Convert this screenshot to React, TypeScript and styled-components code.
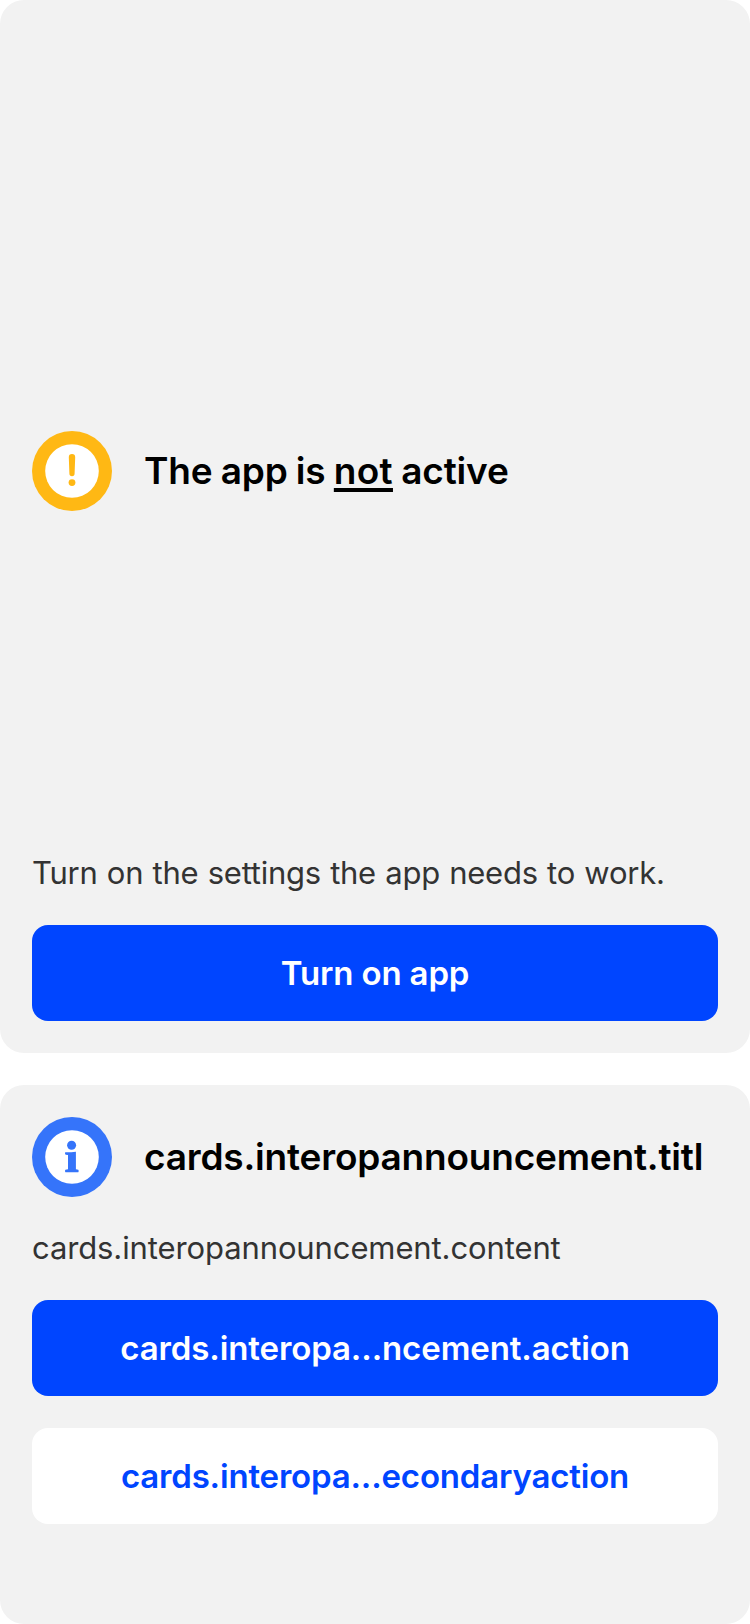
import React from "react";
import styled, { createGlobalStyle } from "styled-components";

const GlobalStyle = createGlobalStyle`
  * { box-sizing: border-box; }
  body {
    margin: 0;
    background: #ffffff;
    font-family: Inter, "Liberation Sans", sans-serif;
  }
`;

const Screen = styled.main`
  display: flex;
  flex-direction: column;
  gap: 32px;
  width: 750px;
  height: 1624px;
  overflow: hidden;
`;

const Card = styled.section<{ $height: number; $top: number }>`
  display: flex;
  flex-direction: column;
  flex: none;
  height: ${(p) => p.$height}px;
  padding: ${(p) => p.$top}px 32px 32px;
  border-radius: 24px;
  background: #f2f2f2;
`;

const Header = styled.header<{ $fill?: boolean }>`
  display: flex;
  align-items: center;
  gap: 32px;
  flex: ${(p) => (p.$fill ? 1 : "none")};
`;

const StatusIcon = styled.svg`
  display: block;
  flex: none;
  width: 80px;
  height: 80px;
`;

const Title = styled.h1`
  margin: 0;
  font-size: 37px;
  line-height: 46px;
  font-weight: 600;
  letter-spacing: -0.195px;
  word-spacing: -0.8px;
  color: #000000;
  white-space: nowrap;
`;

const Emphasis = styled.u`
  letter-spacing: 0.3px;
  text-decoration-thickness: 4px;
  text-underline-offset: 4px;
  text-decoration-skip-ink: none;
`;

const Body = styled.p<{ $tracking: number }>`
  margin: 0;
  font-size: 31px;
  line-height: 38px;
  letter-spacing: ${(p) => p.$tracking}px;
  word-spacing: 0.9px;
  color: #333333;
`;

const Actions = styled.div`
  display: flex;
  flex-direction: column;
  gap: 32px;
  margin-top: 33px;
`;

const Summary = styled.div`
  display: flex;
  flex-direction: column;
  gap: 32px;
`;

const Button = styled.button<{ $secondary?: boolean; $tracking: number }>`
  display: flex;
  align-items: center;
  justify-content: center;
  flex: none;
  height: 96px;
  margin: 0;
  padding: 0;
  border: 0;
  border-radius: 16px;
  background: ${(p) => (p.$secondary ? "#ffffff" : "#0045ff")};
  color: ${(p) => (p.$secondary ? "#0045ff" : "#ffffff")};
  font-family: inherit;
  font-size: 33px;
  line-height: 40px;
  font-weight: 600;
  letter-spacing: ${(p) => p.$tracking}px;
`;

const WarningIcon = () => (
  <StatusIcon viewBox="0 0 80 80" aria-hidden="true">
    <circle cx="40" cy="40" r="40" fill="#ffb814" />
    <circle cx="40" cy="40" r="26.8" fill="#ffffff" />
    <path
      d="M36.8 26.2a3.2 3.2 0 0 1 6.4 0l-.6 16.4a2.6 2.6 0 0 1-5.2 0z"
      fill="#ffb814"
    />
    <circle cx="40" cy="51.6" r="3.4" fill="#ffb814" />
  </StatusIcon>
);

const InfoIcon = () => (
  <StatusIcon viewBox="0 0 80 80" aria-hidden="true">
    <circle cx="40" cy="40" r="40" fill="#3574fa" />
    <circle cx="40" cy="40" r="26.8" fill="#ffffff" />
    <circle cx="39.6" cy="28.3" r="4.5" fill="#3574fa" />
    <path
      d="M33.2 35.3Q38.5 35.4 43.9 34.8V52.3L46.3 52.7Q47.2 54 46.3 55.3Q39.8 55 33.4 55.3Q32.5 54 33.4 52.7L36 52.3V38L33.6 37.7Q32.6 36.5 33.2 35.3Z"
      fill="#3574fa"
    />
  </StatusIcon>
);

export default function App() {
  return (
    <>
      <GlobalStyle />
      <Screen>
        <Card $height={1053} $top={88}>
          <Header $fill>
            <WarningIcon />
            <Title>
              The app is <Emphasis>not</Emphasis> active
            </Title>
          </Header>
          <Body $tracking={-0.26}>
            Turn on the settings the app needs to work.
          </Body>
          <Actions>
            <Button $tracking={-0.15}>Turn on app</Button>
          </Actions>
        </Card>
        <Card $height={539} $top={32}>
          <Summary>
            <Header>
              <InfoIcon />
              <Title>cards.interopannouncement.titl</Title>
            </Header>
            <Body $tracking={-0.11}>cards.interopannouncement.content</Body>
          </Summary>
          <Actions>
            <Button $tracking={-0.11}>cards.interopa...ncement.action</Button>
            <Button $secondary $tracking={-0.18}>
              cards.interopa...econdaryaction
            </Button>
          </Actions>
        </Card>
      </Screen>
    </>
  );
}
